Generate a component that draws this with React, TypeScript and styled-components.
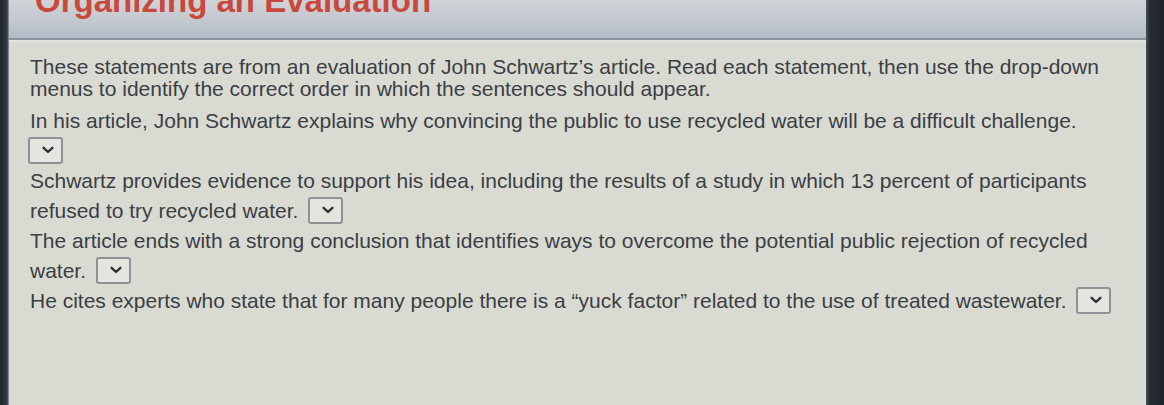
import React from "react";
import styled, { createGlobalStyle } from "styled-components";

const GlobalStyle = createGlobalStyle`
  html, body { margin: 0; padding: 0; background: #d9dbd3; }
  body { font-family: "Liberation Sans", Arial, sans-serif; }
`;

const Frame = styled.div`
  display: flex;
  width: 1164px;
  height: 405px;
  overflow: hidden;
`;

const Bezel = styled.div<{ $w: number; $side: "left" | "right" }>`
  flex: 0 0 ${(p) => p.$w}px;
  background: ${(p) =>
    p.$side === "left"
      ? "linear-gradient(90deg, #20252c 0%, #353b44 80%, #9aa0a8 100%)"
      : "linear-gradient(90deg, #4a525c 0%, #262c34 20%, #1f242b 100%)"};
`;

const Screen = styled.div`
  flex: 1;
  display: flex;
  flex-direction: column;
  background: #d9dbd3;
  min-width: 0;
`;

const Header = styled.div`
  flex: 0 0 38px;
  overflow: hidden;
  background: linear-gradient(180deg, #d0d3d7 0%, #c3c8cf 55%, #b3bbc7 100%);
  border-bottom: 2px solid #8a929e;
  box-shadow: 0 2px 0 #e2e4e2;
  padding-left: 26px;
`;

const Title = styled.h1`
  margin: -17px 0 0 0;
  font-family: "Liberation Sans", Arial, sans-serif;
  font-weight: 700;
  font-size: 33px;
  line-height: 36px;
  color: #c9483c;
  white-space: nowrap;
`;

const Content = styled.div`
  padding: 16px 0 0 21px;
  width: 1086px;
  color: #3b3e43;
  font-size: 21px;
`;

const Instructions = styled.p`
  margin: 0 0 6px 0;
  line-height: 22px;
`;

const Statement = styled.p`
  margin: 0;
  line-height: 30px;
`;

const Select = styled.span<{ $lead?: boolean }>`
  display: inline-flex;
  align-items: center;
  justify-content: flex-end;
  vertical-align: middle;
  box-sizing: border-box;
  width: 35px;
  height: 27px;
  margin-left: ${(p) => (p.$lead ? "-2px" : "4px")};
  padding-right: 7px;
  border: 2px solid #8e9196;
  border-radius: 3px;
  background: #e3e5df;
  position: relative;
  top: -2px;
`;

const Chevron = () => (
  <svg width="12" height="8" viewBox="0 0 12 8" fill="none">
    <path d="M1.6 1.8 L6 6 L10.4 1.8" stroke="#2c2f33" strokeWidth="2.3" strokeLinecap="round" strokeLinejoin="round" />
  </svg>
);

const Dropdown = ({ lead }: { lead?: boolean }) => (
  <Select $lead={lead}>
    <Chevron />
  </Select>
);

const Breaker = styled.span`
  display: block;
  height: 0;
`;

export default function App() {
  return (
    <>
      <GlobalStyle />
      <Frame>
        <Bezel $w={9} $side="left" />
        <Screen>
          <Header>
            <Title>Organizing an Evaluation</Title>
          </Header>
          <Content>
            <Instructions>
              These statements are from an evaluation of John Schwartz’s article. Read each statement, then use the drop-down menus to identify the correct order in which the sentences should appear.
            </Instructions>
            <Statement>
              In his article, John Schwartz explains why convincing the public to use recycled water will be a difficult challenge.
              <Breaker />
              <Dropdown lead />
            </Statement>
            <Statement>
              Schwartz provides evidence to support his idea, including the results of a study in which 13 percent of participants refused to try recycled water. <Dropdown />
            </Statement>
            <Statement>
              The article ends with a strong conclusion that identifies ways to overcome the potential public rejection of recycled water. <Dropdown />
            </Statement>
            <Statement>
              He cites experts who state that for many people there is a “yuck factor” related to the use of treated wastewater. <Dropdown />
            </Statement>
          </Content>
        </Screen>
        <Bezel $w={18} $side="right" />
      </Frame>
    </>
  );
}
